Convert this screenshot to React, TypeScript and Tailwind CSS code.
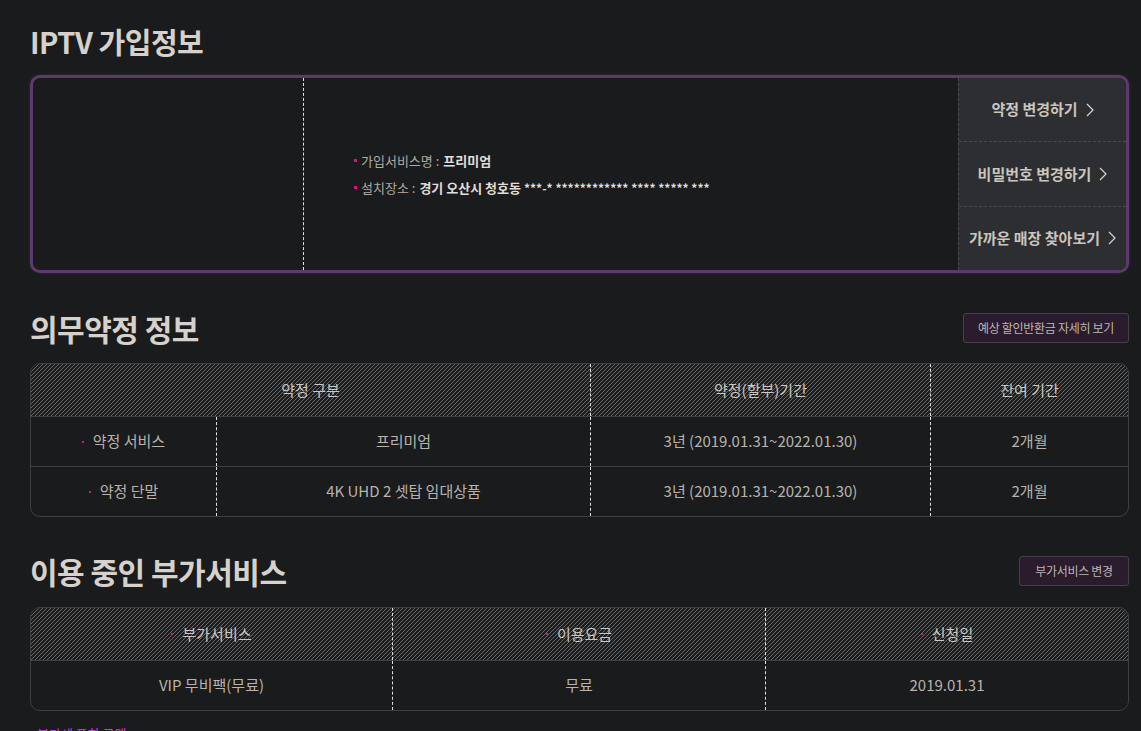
import type { ReactNode } from 'react';

const font = { fontFamily: '"Noto Sans CJK KR", "Noto Sans", sans-serif' };

const hatch =
  'bg-[#1d1e20] bg-[linear-gradient(-45deg,transparent_0%,transparent_38%,#676767_38%,#676767_62%,transparent_62%,transparent_100%)] bg-[length:4px_4px]';

function Dot({ size = 'w-[2px] h-[2px]' }: { size?: string }) {
  return <span className={`inline-block ${size} bg-[#d4177f]`} />;
}

function Chevron() {
  return (
    <svg width="8" height="14" viewBox="0 0 8 14" className="shrink-0">
      <polyline points="1,1 7,7 1,13" fill="none" stroke="#d8d4ce" strokeWidth="1.2" />
    </svg>
  );
}

function SectionHeader({ title, action, width }: { title: string; action?: string; width?: string }) {
  return (
    <div className="flex h-9 items-center justify-between">
      <h2 className="text-[30px] font-bold leading-9 tracking-[-0.5px] text-[#d6d1ca]">{title}</h2>
      {action ? (
        <button
          type="button"
          className={`h-[30px] ${width} rounded-[3px] border border-[#46404a] bg-[#2a1b2d] text-[12px] tracking-[-0.3px] text-[#bdb7b1]`}
        >
          {action}
        </button>
      ) : null}
    </div>
  );
}

function Cell({ children, dashed, className = '' }: { children: ReactNode; dashed?: boolean; className?: string }) {
  return (
    <div
      className={`flex items-center justify-center gap-[9px] text-[15px] text-[#b9b3ab] ${
        dashed ? 'border-l border-dashed border-[#e0e0e0]' : ''
      } ${className}`}
    >
      {children}
    </div>
  );
}

const menu = ['약정 변경하기', '비밀번호 변경하기', '가까운 매장 찾아보기'];

export default function App() {
  return (
    <div style={font} className="min-h-screen bg-[#1a1b1d] pb-10 pl-[30px] pr-[12px] pt-[23px]">
      <h1 className="text-[29px] font-bold leading-9 tracking-[-0.5px] text-[#d6d1ca]">IPTV 가입정보</h1>

      <div className="mt-4 flex h-[198px] overflow-hidden rounded-[10px] border-[3px] border-[#5d3a6d] shadow-[0_0_3px_rgba(255,255,255,0.12)]">
        <div className="w-[271px] border-r border-dashed border-[#e0e0e0]" />
        <div className="flex flex-1 flex-col justify-center gap-[8px] pl-[50px] text-[13px] text-[#b0aaa2]">
          <p className="flex items-center gap-[4px]">
            <Dot size="w-[3px] h-[3px]" />
            가입서비스명 : <b className="text-[#e2ddd6]">프리미엄</b>
          </p>
          <p className="flex items-center gap-[4px]">
            <Dot size="w-[3px] h-[3px]" />
            설치장소 :{' '}
            <b className="text-[#e2ddd6]">
              경기 오산시 청호동 <span className="text-[12px]">***-* ************ **** ***** ***</span>
            </b>
          </p>
        </div>
        <div className="flex w-[168px] flex-col border-l border-dashed border-[#4a4b4e] bg-[#2c2e31]">
          {menu.map((label, i) => (
            <div
              key={label}
              className={`flex flex-1 items-center justify-center gap-[8px] whitespace-nowrap text-[15px] font-bold text-[#cbc5bd] ${
                i > 0 ? 'border-t border-dashed border-[#4a4b4e]' : ''
              }`}
            >
              {label}
              <Chevron />
            </div>
          ))}
        </div>
      </div>

      <div className="mt-[37px]">
        <SectionHeader title="의무약정 정보" action="예상 할인반환금 자세히 보기" width="w-[166px]" />
      </div>
      <div className="mt-[17px] overflow-hidden rounded-[10px] border border-[#3e3f42]">
        <div className={`grid h-[53px] grid-cols-[559px_340px_1fr] border-b border-[#3e3f42] ${hatch}`}>
          <Cell className="text-[#ccc7c1]">약정 구분</Cell>
          <Cell dashed className="text-[#ccc7c1]">약정(할부)기간</Cell>
          <Cell dashed className="text-[#ccc7c1]">잔여 기간</Cell>
        </div>
        <div className="grid h-[50px] grid-cols-[185px_374px_340px_1fr] border-b border-[#3e3f42]">
          <Cell>
            <Dot />
            약정 서비스
          </Cell>
          <Cell dashed>프리미엄</Cell>
          <Cell dashed>3년 (2019.01.31~2022.01.30)</Cell>
          <Cell dashed>2개월</Cell>
        </div>
        <div className="grid h-[49px] grid-cols-[185px_374px_340px_1fr]">
          <Cell>
            <Dot />
            약정 단말
          </Cell>
          <Cell dashed>4K UHD 2 셋탑 임대상품</Cell>
          <Cell dashed>3년 (2019.01.31~2022.01.30)</Cell>
          <Cell dashed>2개월</Cell>
        </div>
      </div>

      <div className="mt-[36px]">
        <SectionHeader title="이용 중인 부가서비스" action="부가서비스 변경" width="w-[110px]" />
      </div>
      <div className="mt-[18px] overflow-hidden rounded-[10px] border border-[#3e3f42]">
        <div className={`grid h-[53px] grid-cols-[361px_373px_1fr] border-b border-[#3e3f42] ${hatch}`}>
          <Cell className="text-[#ccc7c1]">
            <Dot />
            부가서비스
          </Cell>
          <Cell dashed className="text-[#ccc7c1]">
            <Dot />
            이용요금
          </Cell>
          <Cell dashed className="text-[#ccc7c1]">
            <Dot />
            신청일
          </Cell>
        </div>
        <div className="grid h-[49px] grid-cols-[361px_373px_1fr]">
          <Cell>VIP 무비팩(무료)</Cell>
          <Cell dashed>무료</Cell>
          <Cell dashed>2019.01.31</Cell>
        </div>
      </div>

      <p className="mt-[13px] flex items-center gap-[5px] text-[13px] text-[#c647d6]">
        <Dot />
        부가세 포함 금액
      </p>
    </div>
  );
}
